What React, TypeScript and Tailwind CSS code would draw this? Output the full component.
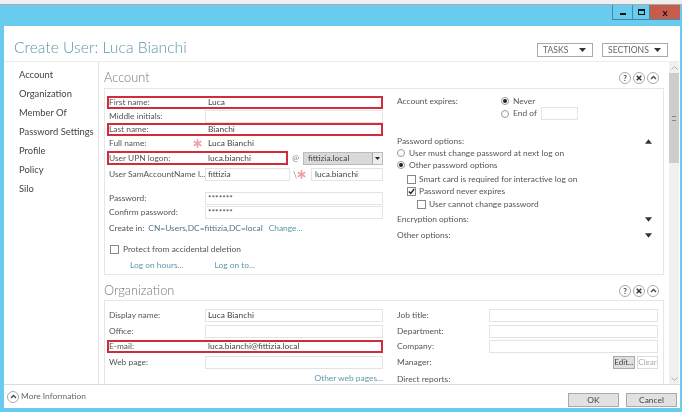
import React from "react";

const font = { fontFamily: '"Lato","Open Sans",sans-serif' };

function Input({ value = "", className = "" }: { value?: string; className?: string }) {
  return (
    <div className={"h-[13px] border border-[#e4e4e4] bg-white px-[2px] text-[8.4px] leading-[11px] text-[#444] overflow-hidden whitespace-nowrap " + className}>
      {value}
    </div>
  );
}

function Row({ label, value, hl, mt = "mt-[1px]" }: { label: string; value?: string; hl?: boolean; mt?: string }) {
  return (
    <div className={"flex items-center h-[13px] pl-[2px] " + mt + (hl ? " outline-2 -outline-offset-2 outline-[#d02c3c]" : "")}>
      <div className="w-[96px] shrink-0 text-[8.4px] text-[#555]">{label}</div>
      <Input value={value} className={"flex-1 " + (hl ? "border-transparent" : "")} />
    </div>
  );
}

function Star({ className = "" }: { className?: string }) {
  return (
    <svg width="9" height="9" viewBox="0 0 10 10" className={"shrink-0 " + className} stroke="#f0a0a8" strokeWidth="1.8">
      <path d="M5 0v10M.7 2.5l8.6 5M.7 7.5l8.6-5" />
    </svg>
  );
}

function Round({ children }: { children: React.ReactNode }) {
  return (
    <div className="w-[12px] h-[12px] rounded-full border border-[#aaa] flex items-center justify-center text-[8px] font-bold text-[#444] leading-none">
      {children}
    </div>
  );
}

function Tools() {
  return (
    <div className="flex gap-[2px] items-center">
      <Round>?</Round>
      <Round>
        <svg width="6" height="6" viewBox="0 0 6 6" fill="none" stroke="#333" strokeWidth="1.5"><path d="M.7.7l4.6 4.6M5.3.7L.7 5.3" /></svg>
      </Round>
      <Round>
        <svg width="7" height="5" viewBox="0 0 7 5" fill="none" stroke="#444" strokeWidth="1.3"><path d="M1 4l2.5-2.5L6 4" /></svg>
      </Round>
    </div>
  );
}

function Radio({ on, label, className = "" }: { on?: boolean; label: string; className?: string }) {
  return (
    <div className={"flex items-center gap-[4px] h-[12px] text-[8.4px] text-[#555] " + className}>
      <div className="w-[8px] h-[8px] rounded-full border border-[#999] flex items-center justify-center">
        {on && <div className="w-[4px] h-[4px] rounded-full bg-[#222]" />}
      </div>
      {label}
    </div>
  );
}

function Check({ on, label, className = "" }: { on?: boolean; label: string; className?: string }) {
  return (
    <div className={"flex items-center gap-[3px] h-[12px] text-[8.4px] text-[#555] " + className}>
      <div className="w-[9px] h-[9px] border border-[#888] flex items-center justify-center">
        {on && (
          <svg width="7" height="7" viewBox="0 0 7 7" fill="none" stroke="#222" strokeWidth="1.4"><path d="M.8 3.5l2 2L6.2 1" /></svg>
        )}
      </div>
      {label}
    </div>
  );
}

function Tri({ up }: { up?: boolean }) {
  return (
    <svg width="7" height="5" viewBox="0 0 8 5" className="ml-auto mr-[1px]">
      <path d={up ? "M0 5l4-5 4 5z" : "M0 0l4 5 4-5z"} fill="#333" />
    </svg>
  );
}

function TopButton({ label, w }: { label: string; w: string }) {
  return (
    <div className={"h-[14px] border border-[#aaa] flex items-center pl-[5px] pr-[6px] text-[8.6px] text-[#666] " + w}>
      {label}
      <svg width="7" height="4" viewBox="0 0 7 4" className="ml-auto"><path d="M0 0l3.5 4L7 0z" fill="#333" /></svg>
    </div>
  );
}

const nav = ["Account", "Organization", "Member Of", "Password Settings", "Profile", "Policy", "Silo"];

export default function App() {
  return (
    <div className="w-[685px] h-[412px] bg-white overflow-hidden blur-[0.35px]" style={font}>
      <div className="w-[682px] h-[412px] flex flex-col">
        <div className="h-[5px] bg-[#efefef] border-b border-[#a9a9a9]" />
        <div className="flex-1 min-h-0 flex flex-col bg-[#69cbee] pl-[4px] pr-[2px] pb-[4px]">
          <div className="h-[21px] flex justify-end items-start">
            <div className="h-[15px] w-[68px] flex border-l border-b border-[#3f8aa8]">
              <div className="w-[20px] border-r border-[#3f8aa8] flex items-center justify-center">
                <div className="w-[6px] h-[2px] mt-[3px] bg-[#111]" />
              </div>
              <div className="w-[17px] border-r border-[#3f8aa8] flex items-center justify-center">
                <div className="w-[7px] h-[6px] border border-t-2 border-[#111]" />
              </div>
              <div className="flex-1 bg-[#c75b4c] flex items-center justify-center text-[10px] font-bold text-[#111] leading-none">x</div>
            </div>
          </div>
          <div className="flex-1 min-h-0 bg-white flex flex-col">
            <div className="h-[36px] shrink-0 flex items-center border-b border-[#ececec] pl-[10px] pr-[12px]">
              <div className="text-[15.7px] font-light text-[#5d9aa6] leading-none mt-[9px]">Create User: Luca Bianchi</div>
              <div className="ml-auto flex gap-[9px] mt-[13px]">
                <TopButton label="TASKS" w="w-[56px]" />
                <TopButton label="SECTIONS" w="w-[66px]" />
              </div>
            </div>
            <div className="flex-1 min-h-0 flex">
              <div className="w-[95px] shrink-0 border-r border-[#e4e4e4] pl-[15px] pt-[4px] text-[9.4px] text-[#444]">
                {nav.map((n) => (
                  <div key={n} className="h-[18.9px] flex items-center whitespace-nowrap">{n}</div>
                ))}
              </div>
              <div className="flex-1 min-w-0 overflow-hidden pl-[5px] pr-[5px]">
                <div className="h-[26px] flex items-center justify-between pr-[5px]">
                  <div className="text-[12.8px] font-light text-[#777] mt-[6px]">Account</div>
                  <div className="mt-[5px]"><Tools /></div>
                </div>
                <div className="h-[187px] border border-[#e6e6e6] flex pl-[2px]">
                  <div className="w-[276px] shrink-0 pt-[7px]">
                    <Row label="First name:" value="Luca" hl mt="mt-0" />
                    <Row label="Middle initials:" />
                    <Row label="Last name:" value="Bianchi" hl mt="mt-0" />
                    <div className="flex items-center h-[13px] mt-[1px] pl-[2px]">
                      <div className="w-[84px] shrink-0 text-[8.4px] text-[#555]">Full name:</div>
                      <Star className="mr-[3px]" />
                      <Input value="Luca Bianchi" className="flex-1 border-transparent" />
                    </div>
                    <div className="flex items-center h-[14px] mt-[1px]">
                      <div className="flex items-center w-[181px] h-[14px] pl-[2px] outline-2 -outline-offset-2 outline-[#d02c3c]">
                        <div className="w-[96px] shrink-0 text-[8.4px] text-[#555]">User UPN logon:</div>
                        <span className="text-[8.4px] text-[#444] pl-[3px]">luca.bianchi</span>
                      </div>
                      <div className="w-[15px] text-center text-[8px] text-[#777]">@</div>
                      <div className="flex-1 h-[13px] flex bg-[#d9d9d9] border border-[#bbb] text-[8.4px] text-[#444] leading-[11px] pl-[4px]">
                        fittizia.local
                        <div className="ml-auto w-[10px] bg-[#ececec] border-l border-[#aaa] flex items-center justify-center">
                          <svg width="5" height="3" viewBox="0 0 5 3"><path d="M0 0l2.5 3L5 0z" fill="#222" /></svg>
                        </div>
                      </div>
                    </div>
                    <div className="flex items-center h-[13px] mt-[3px] pl-[2px]">
                      <div className="w-[96px] shrink-0 text-[8.4px] text-[#555] whitespace-nowrap">User SamAccountName l...</div>
                      <Input value="fittizia" className="w-[85px] shrink-0" />
                      <span className="text-[9px] text-[#999] ml-[3px] leading-none">\</span>
                      <Star className="mr-[5px]" />
                      <Input value="luca.bianchi" className="flex-1 pl-[3px]" />
                    </div>
                    <Row label="Password:" value="*******" mt="mt-[11px]" />
                    <Row label="Confirm password:" value="*******" />
                    <div className="flex items-center h-[13px] mt-[3px] pl-[2px] text-[8.4px] text-[#555] whitespace-nowrap">
                      Create in:
                      <span className="ml-[4px] text-[#53767f]">CN=Users,DC=fittizia,DC=local</span>
                      <span className="ml-[6px] text-[#5b99ab]">Change...</span>
                    </div>
                    <Check label="Protect from accidental deletion" className="mt-[8px] pl-[3px] gap-[4px]" />
                    <div className="flex h-[13px] items-center mt-[4px] pl-[23px] gap-[31px] text-[8.4px] text-[#5b99ab]">
                      <span>Log on hours...</span>
                      <span>Log on to...</span>
                    </div>
                  </div>
                  <div className="flex-1 pl-[14px] pr-[10px] pt-[6px] text-[8.4px] text-[#555]">
                    <div className="flex items-start h-[25px]">
                      <div className="w-[104px] leading-[12px]">Account expires:</div>
                      <div>
                        <Radio on label="Never" />
                        <div className="flex items-center">
                          <Radio label="End of" />
                          <Input className="w-[37px] ml-[4px]" />
                        </div>
                      </div>
                    </div>
                    <div className="flex items-center h-[12px] mt-[15px]">Password options:<Tri up /></div>
                    <Radio label="User must change password at next log on" />
                    <Radio on label="Other password options" />
                    <Check label="Smart card is required for interactive log on" className="pl-[10px] mt-[2px]" />
                    <Check on label="Password never expires" className="pl-[10px]" />
                    <Check label="User cannot change password" className="pl-[20px] mt-[1px]" />
                    <div className="flex items-center h-[12px] mt-[3px]">Encryption options:<Tri /></div>
                    <div className="flex items-center h-[12px] mt-[4px]">Other options:<Tri /></div>
                  </div>
                </div>
                <div className="h-[25px] flex items-center justify-between pr-[5px]">
                  <div className="text-[12.8px] font-light text-[#777] mt-[7px]">Organization</div>
                  <div className="mt-[6px]"><Tools /></div>
                </div>
                <div className="h-[100px] border border-[#e6e6e6] border-b-0 flex pl-[2px]">
                  <div className="w-[276px] shrink-0 pt-[8px]">
                    <Row label="Display name:" value="Luca Bianchi" mt="mt-0" />
                    <Row label="Office:" mt="mt-[2.5px]" />
                    <Row label="E-mail:" value="luca.bianchi@fittizia.local" hl mt="mt-[2.5px]" />
                    <Row label="Web page:" mt="mt-[2.5px]" />
                    <div className="text-right text-[8.4px] text-[#5b99ab] mt-[3px] leading-[12px]">Other web pages...</div>
                  </div>
                  <div className="flex-1 pl-[14px] pr-[5px] pt-[8px] text-[8.4px] text-[#555]">
                    {["Job title:", "Department:", "Company:"].map((l) => (
                      <div key={l} className="flex items-center h-[13px] mb-[2.5px]">
                        <div className="w-[92px] shrink-0">{l}</div>
                        <Input className="flex-1" />
                      </div>
                    ))}
                    <div className="flex items-center h-[13px]">
                      Manager:
                      <div className="ml-auto flex gap-[2px] text-[8px] leading-[11px]">
                        <div className="w-[22px] h-[13px] border border-[#aaa] bg-[#dedede] text-center text-[#444]">Edit...</div>
                        <div className="w-[21px] h-[13px] border border-[#ddd] text-center text-[#aaa]">Clear</div>
                      </div>
                    </div>
                    <div className="mt-[4px] leading-[12px]">Direct reports:</div>
                  </div>
                </div>
              </div>
              <div className="w-[10px] shrink-0 bg-[#f0f0f0] flex flex-col mr-[1px]">
                <div className="h-[11px] flex items-center justify-center">
                  <svg width="7" height="4" viewBox="0 0 7 4" fill="none" stroke="#aaa"><path d="M.5 3.5l3-3 3 3" /></svg>
                </div>
                <div className="h-[90px] bg-[#cdcdcd] flex items-center justify-center">
                  <div className="w-[4px] h-[5px] border-y border-[#888]" />
                </div>
                <div className="flex-1" />
                <div className="h-[11px] flex items-center justify-center">
                  <svg width="7" height="4" viewBox="0 0 7 4" fill="none" stroke="#aaa"><path d="M.5.5l3 3 3-3" /></svg>
                </div>
              </div>
            </div>
            <div className="h-[24px] shrink-0 border-t border-[#dcdcdc] bg-white flex items-center pl-[3px] pr-[3px] text-[8.4px] text-[#666]">
              <Round>
                <svg width="7" height="5" viewBox="0 0 7 5" fill="none" stroke="#444" strokeWidth="1.3"><path d="M1 4l2.5-2.5L6 4" /></svg>
              </Round>
              <span className="ml-[2px]">More Information</span>
              <div className="ml-auto flex gap-[7px] mt-[6px]">
                <div className="w-[51px] h-[14px] border border-[#aaa] bg-[#e1e1e1] text-center leading-[12px] text-[#444]">OK</div>
                <div className="w-[51px] h-[14px] border border-[#aaa] bg-[#e1e1e1] text-center leading-[12px] text-[#444]">Cancel</div>
              </div>
            </div>
          </div>
        </div>
      </div>
    </div>
  );
}
